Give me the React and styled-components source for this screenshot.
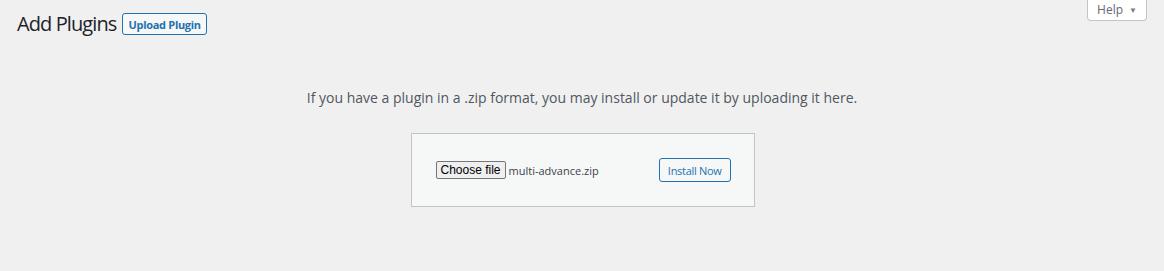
import React from "react";
import styled, { createGlobalStyle } from "styled-components";

const GlobalStyle = createGlobalStyle`
  html, body {
    margin: 0;
    padding: 0;
    background: #f0f0f1;
  }
  body {
    font-family: "Open Sans", "Noto Sans", sans-serif;
    color: #3c434a;
  }
`;

const Page = styled.div`
  width: 1164px;
  height: 271px;
  overflow: hidden;
`;

const TopBar = styled.div`
  display: flex;
  justify-content: space-between;
  align-items: flex-start;
  padding: 0 17px 0 17px;
`;

const TitleRow = styled.div`
  display: flex;
  align-items: center;
  gap: 6px;
  padding-top: 12px;
`;

const Title = styled.h1`
  margin: 0;
  font-size: 20px;
  font-weight: 400;
  letter-spacing: -0.9px;
  line-height: 24px;
  color: #1d2327;
`;

const OutlineButton = styled.button`
  font-family: "Open Sans", "Noto Sans", sans-serif;
  font-size: 11px;
  font-weight: ${(p) => (p.$bold ? 700 : 400)};
  letter-spacing: -0.3px;
  height: ${(p) => (p.$bold ? "22px" : "24px")};
  padding: 0 ${(p) => (p.$bold ? "5px" : "8px")};
  color: #2271b1;
  background: #f6f7f7;
  border: 1px solid #2271b1;
  border-radius: 3px;
  cursor: pointer;
  white-space: nowrap;
`;

const HelpTab = styled.button`
  font-family: "Open Sans", "Noto Sans", sans-serif;
  font-size: 12px;
  color: #646970;
  background: #fff;
  border: 1px solid #c3c4c7;
  border-top: none;
  border-radius: 0 0 4px 4px;
  height: 21px;
  width: 60px;
  padding: 0 0 2px;
  display: flex;
  align-items: center;
  justify-content: center;
  gap: 6px;
`;

const Caret = styled.span`
  font-size: 8px;
  color: #787c82;
`;

const UploadArea = styled.div`
  display: flex;
  flex-direction: column;
  align-items: center;
  padding-top: 52px;
`;

const Help = styled.p`
  margin: 0;
  font-size: 14px;
  line-height: 20px;
  color: #50575e;
`;

const UploadForm = styled.form`
  margin-top: 25px;
  margin-left: 1px;
  width: 344px;
  box-sizing: border-box;
  padding: 24px 23px 24px 24px;
  background: #f6f7f7;
  border: 1px solid #c3c4c7;
  display: flex;
  justify-content: space-between;
  align-items: center;
`;

const FilePicker = styled.div`
  display: flex;
  align-items: center;
  gap: 3px;
`;

const FileButton = styled.span`
  font-family: "Liberation Sans", Arial, sans-serif;
  font-size: 12px;
  color: #000;
  background: #efefef;
  border: 1px solid #767676;
  border-radius: 2px;
  height: 18px;
  box-sizing: border-box;
  padding: 0 4px;
  display: flex;
  align-items: center;
`;

const FileName = styled.span`
  font-size: 11px;
  color: #3c434a;
`;

export default function App() {
  return (
    <Page>
      <GlobalStyle />
      <TopBar>
        <TitleRow>
          <Title>Add Plugins</Title>
          <OutlineButton $bold type="button">Upload Plugin</OutlineButton>
        </TitleRow>
        <HelpTab type="button">
          Help <Caret>▼</Caret>
        </HelpTab>
      </TopBar>
      <UploadArea>
        <Help>
          If you have a plugin in a .zip format, you may install or update it by uploading it here.
        </Help>
        <UploadForm onSubmit={(e) => e.preventDefault()}>
          <FilePicker>
            <FileButton>Choose file</FileButton>
            <FileName>multi-advance.zip</FileName>
          </FilePicker>
          <OutlineButton type="submit">Install Now</OutlineButton>
        </UploadForm>
      </UploadArea>
    </Page>
  );
}
